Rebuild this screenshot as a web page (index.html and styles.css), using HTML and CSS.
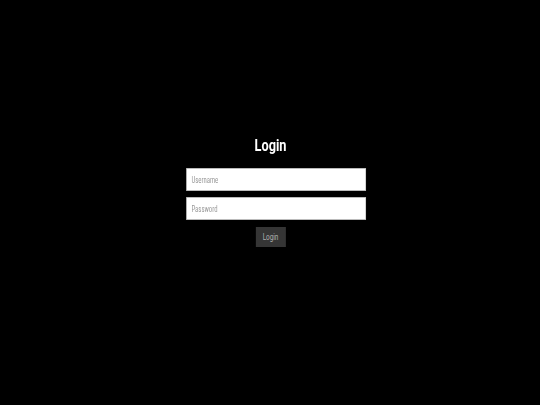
FILE: index.html
```html
<!DOCTYPE html>
<html>
<head>
<meta charset="utf-8">
<link rel="stylesheet" href="styles.css">
</head>
<body>
<div class="page">
  <form class="login">
    <h1 class="title">Login</h1>
    <input class="field" type="text" placeholder="Username">
    <input class="field" type="password" placeholder="Password">
    <button class="btn" type="button">Login</button>
  </form>
</div>
</body>
</html>
```
FILE: styles.css
```css
html, body {
  margin: 0;
  padding: 0;
  background: #000;
  height: 100%;
  overflow: hidden;
}
.page {
  display: flex;
  justify-content: center;
  padding-top: 135px;
  font-family: Roboto, "Liberation Sans", Arial, sans-serif;
}
/* the original form is squeezed horizontally */
.login {
  width: 225px;
  display: flex;
  flex-direction: column;
  align-items: center;
  transform: scaleX(0.75);
  transform-origin: 50% 0;
}
.title {
  margin: 0 0 13px 0;
  font-size: 17px;
  line-height: 20px;
  font-weight: bold;
  color: #fff;
}
.field {
  align-self: flex-start;
  box-sizing: border-box;
  width: 240px;
  height: 23px;
  margin: 0 0 6px 0;
  padding: 0 6px;
  border: 1px solid #bbb;
  background: #fff;
  font-family: Roboto, "Liberation Sans", Arial, sans-serif;
  font-stretch: condensed;
  font-size: 9px;
  outline: none;
}
.field::placeholder {
  color: #9a9a9a;
}
.btn {
  margin-top: 1px;
  width: 40px;
  height: 20px;
  padding: 0;
  border: none;
  background: #353535;
  color: #b0b0b0;
  font-family: Roboto, "Liberation Sans", Arial, sans-serif;
  font-size: 8.5px;
}
```
